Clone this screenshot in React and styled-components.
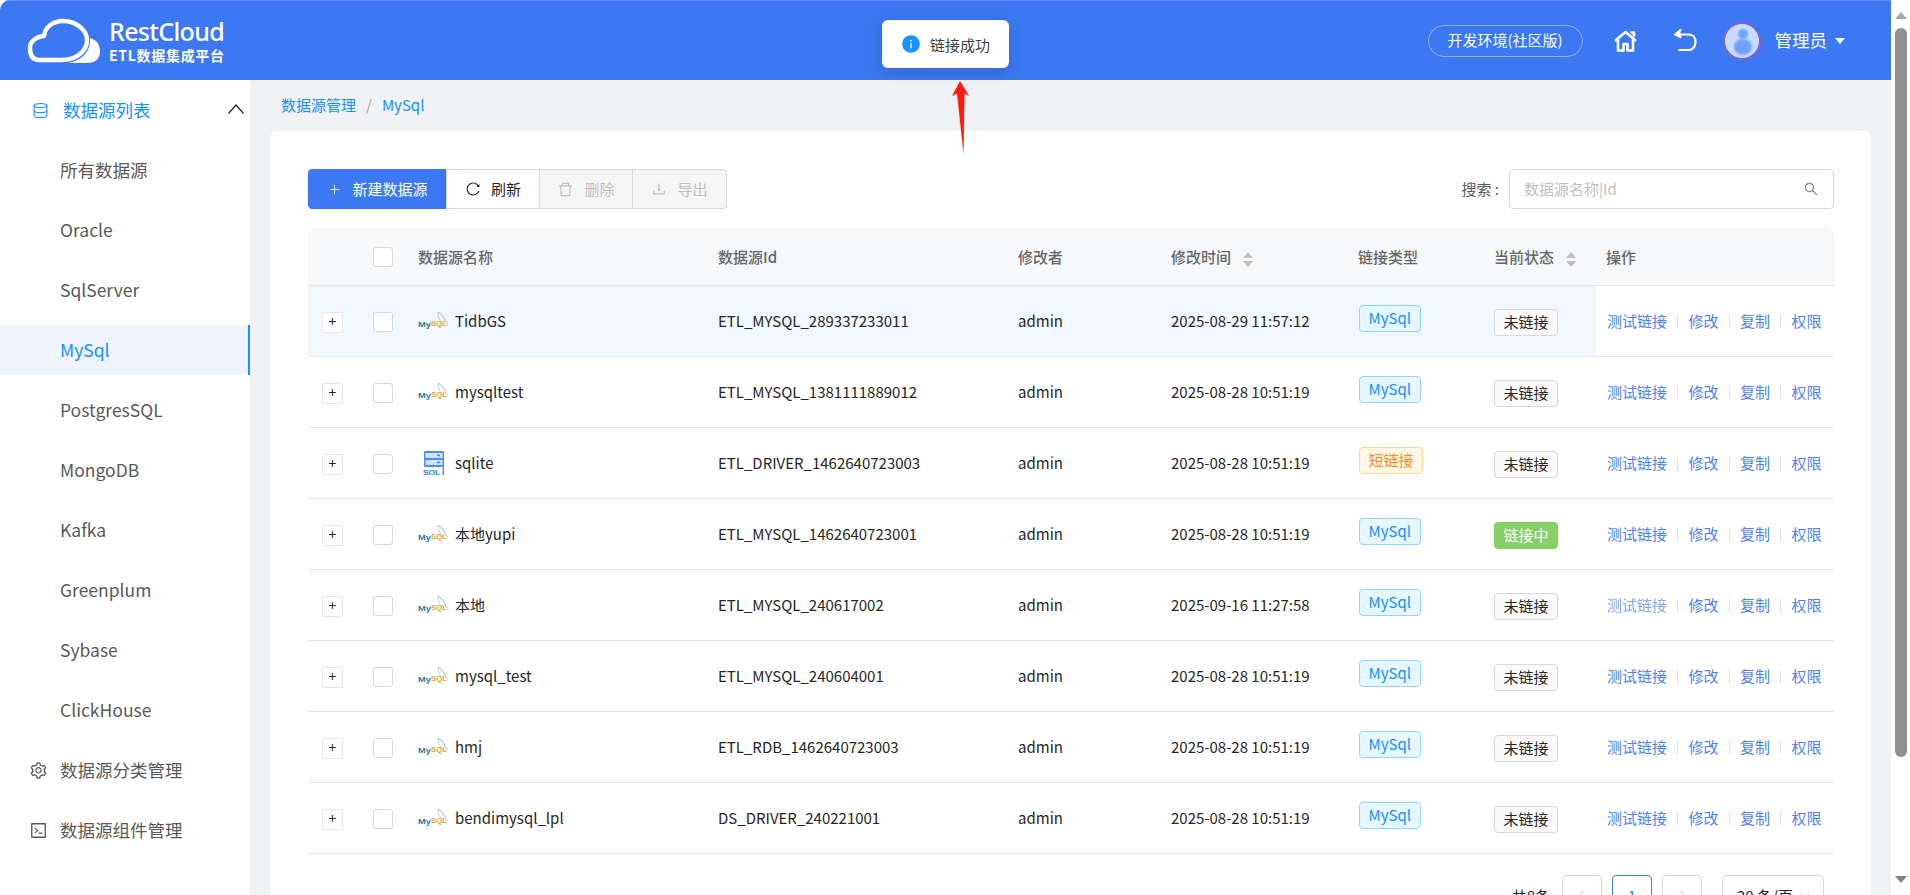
import React from "react";
import styled, { createGlobalStyle } from "styled-components";
import { ChevronLeft, ChevronRight, ChevronDown, Database, Plus } from "lucide-react";
import {
  AiFillInfoCircle,
  AiOutlineCode,
  AiOutlineDelete,
  AiOutlineDownload,
  AiOutlineReload,
  AiOutlineSearch,
  AiOutlineSetting,
} from "react-icons/ai";

const PRIMARY = "#3c78f1";
const LINK = "#1890ff";
const COLUMNS = "65px 45px 300px 300px 153px 187px 136px 102px 238px";

const GlobalStyle = createGlobalStyle`
  html, body {
    margin: 0;
    padding: 0;
    height: 100%;
    overflow: hidden;
    background: #fff;
  }
  * { box-sizing: border-box; }
  body {
    font-family: "Noto Sans CJK SC", "Noto Sans", sans-serif;
    font-size: 15px;
    color: #262626;
  }
`;

const Window = styled.div`
  position: relative;
  width: 1910px;
  height: 895px;
  display: flex;
  overflow: hidden;
  border-radius: 10px;
`;

const Main = styled.div`
  flex: 1;
  min-width: 0;
  display: flex;
  flex-direction: column;
`;

const Header = styled.header`
  height: 80px;
  flex-shrink: 0;
  background: ${PRIMARY};
  border-top: 1px solid #5a8cf3;
  padding: 0 46px 0 20px;
  display: flex;
  align-items: center;
  justify-content: space-between;
`;

const Brand = styled.div`
  display: flex;
  align-items: center;
  color: #fff;
`;

const BrandText = styled.div`
  display: flex;
  flex-direction: column;
`;

const BrandName = styled.span`
  font-family: "Noto Sans", sans-serif;
  font-size: 25px;
  line-height: 28px;
  font-weight: 500;
  letter-spacing: -0.65px;
`;

const BrandSub = styled.span`
  font-size: 14px;
  line-height: 18px;
  font-weight: 700;
  margin-top: 1px;
  letter-spacing: 0.7px;
`;

const HeaderRight = styled.div`
  display: flex;
  align-items: center;
  color: #fff;
`;

const EnvPill = styled.div`
  width: 155px;
  height: 32px;
  padding-bottom: 2px;
  border: 1px solid rgba(255, 255, 255, 0.45);
  border-radius: 16px;
  font-size: 15px;
  display: flex;
  align-items: center;
  justify-content: center;
  margin-right: 31px;
`;

const HeaderIcon = styled.svg`
  display: block;
  margin-right: ${({ $gap }) => $gap}px;
`;

const UserName = styled.span`
  font-size: 17.5px;
  margin-left: 14px;
  padding-bottom: 2px;
`;

const Caret = styled.i`
  width: 0;
  height: 0;
  margin-left: 8px;
  border-left: 5px solid transparent;
  border-right: 5px solid transparent;
  border-top: 6px solid #fff;
`;

const Body = styled.div`
  flex: 1;
  min-height: 0;
  display: flex;
`;

const Sidebar = styled.aside`
  width: 250px;
  flex-shrink: 0;
  background: #fff;
  padding-top: 5px;
  display: flex;
  flex-direction: column;
  gap: 10px;
`;

const MenuTitle = styled.div`
  height: 50px;
  padding: 0 6px 2px 32px;
  display: flex;
  align-items: center;
  color: ${LINK};
  font-size: 17.5px;
`;

const MenuTitleIcon = styled(Database)`
  margin: 2px 14px 0 0;
`;

const MenuTitleLabel = styled.span`
  flex: 1;
`;

const MenuItem = styled.div`
  height: 50px;
  padding: 0 0 2px 60px;
  display: flex;
  align-items: center;
  font-size: 17.5px;
  color: ${({ $active }) => ($active ? LINK : "#595959")};
  background: ${({ $active }) => ($active ? "#f0f4ff" : "transparent")};
  border-right: 2px solid ${({ $active }) => ($active ? LINK : "transparent")};
`;

const MenuGroup = styled.div`
  height: 50px;
  padding: 0 0 2px 29px;
  display: flex;
  align-items: center;
  font-size: 17.5px;
  color: #595959;
  svg { margin: 2px 12px 0 0; }
`;

const Content = styled.main`
  flex: 1;
  min-width: 0;
  background: #f0f2f5;
  padding: 0 20px;
  overflow: hidden;
`;

const Breadcrumb = styled.div`
  height: 51px;
  padding: 0 0 2px 11px;
  display: flex;
  align-items: center;
  color: ${LINK};
  font-size: 15px;
`;

const BreadcrumbSep = styled.span`
  color: #a6a6a6;
  margin: 0 10px 0 10px;
`;

const Card = styled.section`
  background: #fff;
  border-radius: 8px;
  padding: 38px 37px 0 38px;
  height: 900px;
`;

const Toolbar = styled.div`
  height: 40px;
  margin-bottom: 19px;
  display: flex;
  align-items: center;
`;

const ToolButton = styled.div`
  width: ${({ $w }) => $w}px;
  height: 40px;
  padding-bottom: 2px;
  margin-left: ${({ $first }) => ($first ? 0 : -1)}px;
  display: flex;
  align-items: center;
  justify-content: center;
  gap: ${({ $gap }) => $gap || 10}px;
  font-size: 15px;
  color: #262626;
  background: #fff;
  border: 1px solid #d9d9d9;
  ${({ $primary }) =>
    $primary &&
    `
    background: ${PRIMARY};
    border-color: ${PRIMARY};
    color: #fff;
    border-radius: 4px 0 0 4px;
  `}
  ${({ $disabled }) =>
    $disabled &&
    `
    background: #f5f5f5;
    color: #bfbfbf;
  `}
  ${({ $last }) => $last && `border-radius: 0 4px 4px 0;`}
  svg { margin-top: 2px; }
`;

const SearchLabel = styled.span`
  margin-left: auto;
  margin-right: 10px;
  padding-bottom: 2px;
  color: #595959;
`;

const SearchBox = styled.div`
  width: 325px;
  height: 40px;
  border: 1px solid #d9d9d9;
  border-radius: 4px;
  padding: 0 14px 2px;
  display: flex;
  align-items: center;
  justify-content: space-between;
  color: #bfbfbf;
  svg { color: #8c8c8c; margin-top: 2px; }
`;

const TableHead = styled.div`
  display: grid;
  grid-template-columns: ${COLUMNS};
  height: 58px;
  align-items: center;
  background: #f7f8fa;
  border-radius: 8px 8px 0 0;
  border-bottom: 1px solid #e8e8e8;
  color: #666;
  font-weight: 500;
`;

const HeadLabel = styled.div`
  display: flex;
  align-items: center;
  gap: 12px;
  padding-left: ${({ $pad }) => $pad || 0}px;
`;

const Sorter = styled.span`
  display: flex;
  flex-direction: column;
  gap: 3px;
  margin-top: 5px;
  &::before,
  &::after {
    content: "";
    width: 0;
    height: 0;
    border-left: 5px solid transparent;
    border-right: 5px solid transparent;
  }
  &::before { border-bottom: 6px solid #bfbfbf; }
  &::after { border-top: 6px solid #bfbfbf; }
`;

const Row = styled.div`
  display: grid;
  grid-template-columns: ${COLUMNS};
  height: 71px;
  align-items: stretch;
  border-bottom: 1px solid #e8e8e8;
  background: ${({ $hover }) => ($hover ? "#f0f7fe" : "#fff")};
`;

const Cell = styled.div`
  display: flex;
  align-items: center;
  min-width: 0;
`;

const TextCell = styled(Cell)`
  padding-bottom: 2px;
`;

const ExpandCell = styled(Cell)`
  padding-left: 14px;
`;

const ExpandButton = styled.span`
  width: 21px;
  height: 21px;
  margin-top: 2px;
  padding-bottom: 2px;
  background: #fff;
  border: 1px solid #e8e8e8;
  border-radius: 2px;
  display: flex;
  align-items: center;
  justify-content: center;
  font-size: 14px;
  line-height: 1;
  color: #2b1a3c;
`;

const CheckBox = styled.span`
  width: 20px;
  height: 20px;
  margin-top: ${({ $head }) => ($head ? 0 : 1)}px;
  background: #fff;
  border: 1px solid #d9d9d9;
  border-radius: 3px;
`;

const IconSlot = styled.span`
  width: 30px;
  margin: 2px 7px 0 0;
  display: flex;
  justify-content: center;
`;

const TypeTag = styled.span`
  height: 27px;
  padding: 0 8.5px 2px;
  margin: 0 0 6px 1px;
  display: flex;
  align-items: center;
  border-radius: 4px;
  border: 1px solid ${({ $short }) => ($short ? "#ffd591" : "#91d5ff")};
  background: ${({ $short }) => ($short ? "#fff7e6" : "#e6f7ff")};
  color: ${({ $short }) => ($short ? "#fa8c16" : LINK)};
`;

const StatusTag = styled.span`
  width: 64px;
  height: 27px;
  margin-top: 2px;
  padding-bottom: 2px;
  display: flex;
  align-items: center;
  justify-content: center;
  border-radius: 4px;
  border: 1px solid ${({ $on }) => ($on ? "#87d068" : "#d9d9d9")};
  background: ${({ $on }) => ($on ? "#87d068" : "#fafafa")};
  color: ${({ $on }) => ($on ? "#fff" : "#262626")};
`;

const ActionCell = styled(TextCell)`
  background: #fff;
  padding-left: 11px;
`;

const ActionLink = styled.span`
  color: #4f80f3;
  opacity: ${({ $muted }) => ($muted ? 0.7 : 1)};
`;

const ActionSep = styled.i`
  width: 1px;
  height: 13px;
  margin: 2px 10.5px 0 10px;
  background: #e0e0e0;
`;

const Pagination = styled.div`
  display: flex;
  align-items: center;
  justify-content: flex-end;
  gap: 10px;
  margin-top: 21px;
  padding-right: 10px;
`;

const PageTotal = styled.span`
  margin-right: 2px;
`;

const PageButton = styled.span`
  width: 40px;
  height: 40px;
  display: flex;
  align-items: center;
  justify-content: center;
  border: 1px solid ${({ $current }) => ($current ? PRIMARY : "#d9d9d9")};
  border-radius: 4px;
  color: ${({ $current }) => ($current ? PRIMARY : "#bfbfbf")};
`;

const PageSize = styled.span`
  width: 102px;
  height: 40px;
  margin-left: 10px;
  padding: 0 10px 0 14px;
  display: flex;
  align-items: center;
  justify-content: space-between;
  border: 1px solid #d9d9d9;
  border-radius: 4px;
  svg { color: #bfbfbf; }
`;

const ScrollRail = styled.div`
  width: 19px;
  flex-shrink: 0;
  background: #fff;
  padding: 12px 3px 12px 4px;
  display: flex;
  flex-direction: column;
  align-items: center;
`;

const ScrollArrow = styled.i`
  width: 0;
  height: 0;
  border-left: 6px solid transparent;
  border-right: 6px solid transparent;
  ${({ $down }) =>
    $down
      ? `border-top: 7px solid #808080; margin-top: auto;`
      : `border-bottom: 7px solid #a8a8a8;`}
`;

const ScrollThumb = styled.div`
  width: 12px;
  height: 729px;
  margin-top: 9px;
  border-radius: 6px;
  background: #8f8f8f;
`;

const Toast = styled.div`
  position: absolute;
  left: 882px;
  top: 20px;
  width: 127px;
  height: 48px;
  padding-left: 19px;
  display: flex;
  align-items: center;
  gap: 9px;
  background: #fff;
  border-radius: 6px;
  box-shadow: 0 4px 14px rgba(0, 0, 0, 0.15);
  color: #404040;
  svg { color: ${LINK}; }
`;

const RedArrow = styled.svg`
  position: absolute;
  left: 950px;
  top: 80px;
`;

const sideItems = ["所有数据源", "Oracle", "SqlServer", "MySql", "PostgresSQL", "MongoDB", "Kafka", "Greenplum", "Sybase", "ClickHouse"];

const rows = [
  { name: "TidbGS", id: "ETL_MYSQL_289337233011", time: "2025-08-29 11:57:12", hover: true },
  { name: "mysqltest", id: "ETL_MYSQL_1381111889012", time: "2025-08-28 10:51:19" },
  { name: "sqlite", id: "ETL_DRIVER_1462640723003", time: "2025-08-28 10:51:19", short: true },
  { name: "本地yupi", id: "ETL_MYSQL_1462640723001", time: "2025-08-28 10:51:19", on: true },
  { name: "本地", id: "ETL_MYSQL_240617002", time: "2025-09-16 11:27:58", muted: true },
  { name: "mysql_test", id: "ETL_MYSQL_240604001", time: "2025-08-28 10:51:19" },
  { name: "hmj", id: "ETL_RDB_1462640723003", time: "2025-08-28 10:51:19" },
  { name: "bendimysql_lpl", id: "DS_DRIVER_240221001", time: "2025-08-28 10:51:19" },
];

function CloudLogo() {
  return (
    <svg width="89" height="60" viewBox="0 0 89 60">
      <path d="M19 49C12 49 10 43 10 37C10 31 15 26 24 25C25 16 33 10 43 10C56 10 67 19 67 29C67 41 55 49 42 49Z" fill="none" stroke="#fff" strokeWidth="4.4" strokeLinejoin="round" />
      <path d="M70 27C77 29 80 34 80 40C80 47 76 52 68 52L48 52C60 50 71 42 70 27Z" fill="#fff" />
    </svg>
  );
}

function MysqlLogo() {
  return (
    <svg width="30" height="20" viewBox="0 0 30 20">
      <path d="M20 1.5C23 2 25 5 26.5 8C27.5 10.5 28.5 12 29.8 13.5" fill="none" stroke="#7fa6bd" strokeWidth="0.8" />
      <path d="M20 1.5C20 5 21 8 24 12" fill="none" stroke="#9dbccd" strokeWidth="0.7" />
      <text x="0" y="15.5" fontFamily="Liberation Sans, sans-serif" fontSize="8" fontWeight="700" fill="#2a7a9b" textLength="13" lengthAdjust="spacingAndGlyphs">My</text>
      <text x="13" y="15" fontFamily="Liberation Sans, sans-serif" fontSize="6.5" fontWeight="700" fill="#e8a23c" textLength="16" lengthAdjust="spacingAndGlyphs">SQL</text>
    </svg>
  );
}

function SqlLogo() {
  return (
    <svg width="21" height="24" viewBox="0 0 21 24">
      <rect x="1" y="0" width="20" height="16" rx="1" fill="#4a90f0" />
      <rect x="2.5" y="2" width="17" height="5" fill="#cfe2fb" />
      <rect x="2.5" y="9" width="17" height="5" fill="#cfe2fb" />
      <rect x="14" y="3.6" width="3" height="1.6" fill="#4a90f0" />
      <rect x="14" y="10.6" width="3" height="1.6" fill="#4a90f0" />
      <rect x="19.5" y="16" width="1.5" height="8" fill="#4a90f0" />
      <text x="0" y="23.5" fontFamily="Liberation Sans, sans-serif" fontSize="8" fontWeight="700" fill="#2f7be8" textLength="17" lengthAdjust="spacingAndGlyphs">SQL</text>
    </svg>
  );
}

export default function App() {
  return (
    <>
      <GlobalStyle />
      <Window>
        <Main>
          <Header>
            <Brand>
              <CloudLogo />
              <BrandText>
                <BrandName>RestCloud</BrandName>
                <BrandSub>ETL数据集成平台</BrandSub>
              </BrandText>
            </Brand>
            <HeaderRight>
              <EnvPill>开发环境(社区版)</EnvPill>
              <HeaderIcon $gap={37} width="23" height="22" viewBox="0 0 23 22" fill="none" stroke="#fff" strokeWidth="2.6" strokeLinejoin="round">
                <path d="M1 11L11.5 2L22 11" />
                <path d="M4 9.5V20.5H9.5V14H13.5V20.5H19V9.5" />
                <path d="M16.5 2.5H20V6.5" />
              </HeaderIcon>
              <HeaderIcon $gap={26} width="23" height="23" viewBox="0 0 23 23" fill="none" stroke="#fff" strokeWidth="2.2" strokeLinecap="round">
                <path d="M5 5.5H14.5C18.5 5.5 21.5 8.5 21.5 13C21.5 17.5 18.5 21 14.5 21H5" />
                <path d="M6.5 1L1.5 5.5L6.5 8" fill="#fff" />
              </HeaderIcon>
              <svg width="38" height="38" viewBox="0 0 38 38">
                <defs>
                  <filter id="soft">
                    <feGaussianBlur stdDeviation="0.8" />
                  </filter>
                </defs>
                <circle cx="19" cy="19" r="18" fill="#c9dcff" stroke="#7f63c9" strokeWidth="2" />
                <circle cx="20" cy="12" r="5" fill="#6ea2fb" filter="url(#soft)" />
                <ellipse cx="20" cy="25" rx="9" ry="8" fill="#6ea2fb" filter="url(#soft)" />
              </svg>
              <UserName>管理员</UserName>
              <Caret />
            </HeaderRight>
          </Header>
          <Body>
            <Sidebar>
              <MenuTitle>
                <MenuTitleIcon size={17} strokeWidth={1.5} />
                <MenuTitleLabel>数据源列表</MenuTitleLabel>
                <svg width="16" height="10" viewBox="0 0 16 10" fill="none" stroke="#262626" strokeWidth="1.3">
                  <path d="M0.5 9.5L8 1L15.5 9.5" />
                </svg>
              </MenuTitle>
              {sideItems.map((item) => (
                <MenuItem key={item} $active={item === "MySql"}>
                  {item}
                </MenuItem>
              ))}
              <MenuGroup>
                <AiOutlineSetting size={19} />
                数据源分类管理
              </MenuGroup>
              <MenuGroup>
                <AiOutlineCode size={19} />
                数据源组件管理
              </MenuGroup>
            </Sidebar>
            <Content>
              <Breadcrumb>
                数据源管理
                <BreadcrumbSep>/</BreadcrumbSep>
                MySql
              </Breadcrumb>
              <Card>
                <Toolbar>
                  <ToolButton $first $primary $w={139} $gap={10}>
                    <Plus size={15} strokeWidth={1.3} />
                    新建数据源
                  </ToolButton>
                  <ToolButton $w={94}>
                    <AiOutlineReload size={16} />
                    刷新
                  </ToolButton>
                  <ToolButton $w={94} $disabled>
                    <AiOutlineDelete size={17} />
                    删除
                  </ToolButton>
                  <ToolButton $w={95} $disabled $last>
                    <AiOutlineDownload size={16} />
                    导出
                  </ToolButton>
                  <SearchLabel>搜索 :</SearchLabel>
                  <SearchBox>
                    数据源名称|Id
                    <AiOutlineSearch size={16} />
                  </SearchBox>
                </Toolbar>

                <TableHead>
                  <span />
                  <CheckBox $head />
                  <HeadLabel>数据源名称</HeadLabel>
                  <HeadLabel>数据源Id</HeadLabel>
                  <HeadLabel>修改者</HeadLabel>
                  <HeadLabel>
                    修改时间
                    <Sorter />
                  </HeadLabel>
                  <HeadLabel>链接类型</HeadLabel>
                  <HeadLabel>
                    当前状态
                    <Sorter />
                  </HeadLabel>
                  <HeadLabel $pad={10}>操作</HeadLabel>
                </TableHead>

                {rows.map((row) => (
                  <Row key={row.id} $hover={row.hover}>
                    <ExpandCell>
                      <ExpandButton>+</ExpandButton>
                    </ExpandCell>
                    <Cell>
                      <CheckBox />
                    </Cell>
                    <TextCell>
                      <IconSlot>{row.short ? <SqlLogo /> : <MysqlLogo />}</IconSlot>
                      {row.name}
                    </TextCell>
                    <TextCell>{row.id}</TextCell>
                    <TextCell>admin</TextCell>
                    <TextCell>{row.time}</TextCell>
                    <Cell>
                      <TypeTag $short={row.short}>{row.short ? "短链接" : "MySql"}</TypeTag>
                    </Cell>
                    <Cell>
                      <StatusTag $on={row.on}>{row.on ? "链接中" : "未链接"}</StatusTag>
                    </Cell>
                    <ActionCell>
                      <ActionLink $muted={row.muted}>测试链接</ActionLink>
                      <ActionSep />
                      <ActionLink>修改</ActionLink>
                      <ActionSep />
                      <ActionLink>复制</ActionLink>
                      <ActionSep />
                      <ActionLink>权限</ActionLink>
                    </ActionCell>
                  </Row>
                ))}

                <Pagination>
                  <PageTotal>共8条</PageTotal>
                  <PageButton>
                    <ChevronLeft size={18} strokeWidth={1.2} />
                  </PageButton>
                  <PageButton $current>1</PageButton>
                  <PageButton>
                    <ChevronRight size={18} strokeWidth={1.2} />
                  </PageButton>
                  <PageSize>
                    20 条/页
                    <ChevronDown size={16} strokeWidth={1.2} />
                  </PageSize>
                </Pagination>
              </Card>
            </Content>
          </Body>
        </Main>
        <ScrollRail>
          <ScrollArrow />
          <ScrollThumb />
          <ScrollArrow $down />
        </ScrollRail>
        <Toast>
          <AiFillInfoCircle size={20} />
          链接成功
        </Toast>
        <RedArrow width="22" height="76" viewBox="0 0 22 76">
          <path d="M10 1L19 16L14.5 13.5L13.5 74L7 13.5L2 16Z" fill="#ff1a0a" />
        </RedArrow>
      </Window>
    </>
  );
}
